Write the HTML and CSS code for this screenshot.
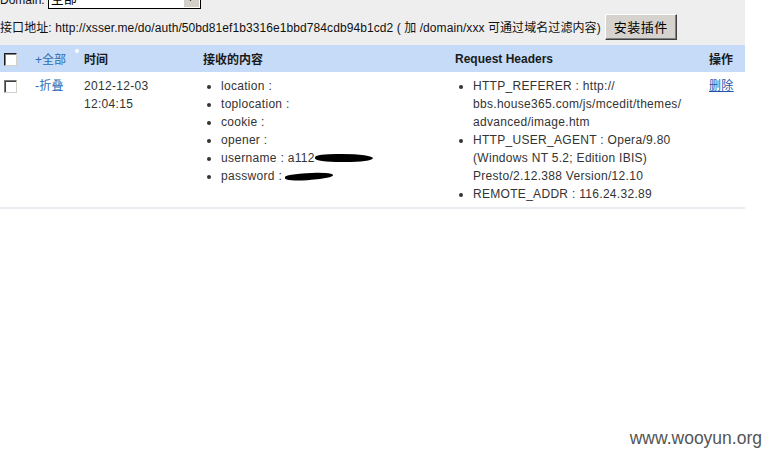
FILE: index.html
```html
<!DOCTYPE html>
<html>
<head>
<meta charset="utf-8">
<link rel="stylesheet" href="styles.css">
</head>
<body>
<div class="page">
  <div class="top">
    <div class="domain-line">
      <span class="label">Domain:</span>
      <span class="select"><span class="sel-text">全部</span><span class="sel-btn"><svg width="8" height="5" viewBox="0 0 8 5"><path d="M0 0h7L3.5 4z" fill="#000"/></svg></span></span>
    </div>
    <div class="api-line">
      <span>接口地址: http://xsser.me/do/auth/50bd81ef1b3316e1bbd784cdb94b1cd2 ( 加 /domain/xxx 可通过域名过滤内容)</span>
      <button class="install">安装插件</button>
    </div>
  </div>
  <table class="grid">
    <colgroup>
      <col class="c1"><col class="c2"><col class="c3"><col class="c4"><col class="c5"><col class="c6">
    </colgroup>
    <thead>
      <tr>
        <th><span class="cb"></span></th>
        <th class="link-cell"><a class="lnk">+全部</a><span class="dot"></span></th>
        <th>时间</th>
        <th>接收的内容</th>
        <th>Request Headers</th>
        <th>操作</th>
      </tr>
    </thead>
    <tbody>
      <tr>
        <td><span class="cb"></span></td>
        <td><a class="lnk">-折叠</a></td>
        <td>2012-12-03<br>12:04:15</td>
        <td>
          <ul>
            <li>location :</li>
            <li>toplocation :</li>
            <li>cookie :</li>
            <li>opener :</li>
            <li>username : a112<span class="blot b1"></span></li>
            <li>password :<span class="blot b2"></span></li>
          </ul>
        </td>
        <td>
          <ul>
            <li>HTTP_REFERER : http://<br>bbs.house365.com/js/mcedit/themes/<br>advanced/image.htm</li>
            <li>HTTP_USER_AGENT : Opera/9.80<br>(Windows NT 5.2; Edition IBIS)<br>Presto/2.12.388 Version/12.10</li>
            <li>REMOTE_ADDR : 116.24.32.89</li>
          </ul>
        </td>
        <td><a class="del">删除</a></td>
      </tr>
    </tbody>
  </table>
  <div class="watermark">www.wooyun.org</div>
</div>
</body>
</html>
```

FILE: styles.css
```css
html, body {
  margin: 0;
  padding: 0;
  background: #fff;
}
body {
  font-family: "Liberation Sans", Arial, "Noto Sans CJK SC", sans-serif;
  font-size: 12px;
  color: #222;
  width: 763px;
  height: 450px;
  overflow: hidden;
}
.page {
  position: relative;
  width: 763px;
  height: 450px;
}
.top {
  width: 745px;
  background: #eeeeee;
  height: 45px;
  overflow: hidden;
}
.domain-line {
  display: flex;
  align-items: flex-end;
  margin-top: -11px;
  height: 20px;
  gap: 3px;
}
.domain-line .label {
  line-height: 14px;
  padding-bottom: 2px;
  color: #111;
}
.select {
  display: flex;
  width: 151px;
  height: 18px;
  border: 1px solid #000;
  background: #fff;
}
.sel-text {
  flex: 1;
  line-height: 18px;
  padding-left: 2px;
  font-size: 13px;
  color: #000;
}
.sel-btn {
  width: 16px;
  height: 16px;
  margin: 1px;
  background: #d4d0c8;
  border-left: 1px solid #fff;
  border-top: 1px solid #fff;
  box-sizing: border-box;
  display: flex;
  align-items: center;
  justify-content: center;
}
.api-line {
  display: flex;
  align-items: center;
  height: 27px;
  margin-top: 4px;
  color: #111;
  white-space: nowrap;
  letter-spacing: 0.08px;
}
.install {
  margin-left: 4px;
  height: 26px;
  width: 72px;
  padding: 0;
  font-family: "Noto Sans CJK SC", sans-serif;
  font-size: 13px;
  letter-spacing: 0.5px;
  color: #000;
  background: #d6d3ce;
  border: 1px solid;
  border-color: #fff #404040 #404040 #fff;
  box-shadow: inset -1px -1px 0 #808080;
}
.grid {
  width: 745px;
  border-collapse: collapse;
  table-layout: fixed;
}
.c1 { width: 31px; }
.c2 { width: 49px; }
.c3 { width: 119px; }
.c4 { width: 252px; }
.c5 { width: 254px; }
.c6 { width: 40px; }
thead tr {
  background: #c5dbf7;
  height: 27px;
}
th {
  text-align: left;
  font-weight: bold;
  padding: 0 4px;
  color: #1a1a1a;
  vertical-align: middle;
}
.link-cell {
  font-weight: normal;
  position: relative;
}
.dot {
  position: absolute;
  right: 1px;
  top: 4px;
  width: 4px;
  height: 4px;
  border-radius: 50%;
  background: #fff;
}
tbody tr {
  border-bottom: 2px solid #ebebf2;
}
td {
  vertical-align: top;
  padding: 5px 4px 4px;
  line-height: 18px;
  color: #333;
  letter-spacing: 0.3px;
}
.cb {
  display: block;
  width: 11px;
  height: 11px;
  border: 1px solid #1c1c1c;
  border-right-color: #d4d0c8;
  border-bottom-color: #d4d0c8;
  background: #fff;
  box-shadow: inset 1px 1px 0 #808080;
  margin-top: 2px;
}
td .cb { border-color: #7a7a7a #d4d0c8 #d4d0c8 #7a7a7a; box-shadow: inset 1px 1px 0 #404040; margin-top: 3px; }
.lnk {
  color: #2c6bb5;
  font-weight: normal;
}
ul {
  margin: 0;
  padding-left: 18px;
  list-style: disc;
}
li {
  line-height: 18px;
}
.del {
  color: #1d56a8;
  text-decoration: underline;
}
.blot {
  display: inline-block;
  vertical-align: middle;
  background: #000;
  border-radius: 40% 60% 50% 50%;
}
.b1 {
  width: 58px;
  height: 8px;
  margin-top: -2px;
  transform: skewX(-10deg);
}
.b2 {
  width: 48px;
  height: 7px;
  margin-left: 3px;
  transform: rotate(-4deg);
}
.watermark {
  position: absolute;
  right: 1px;
  bottom: 1px;
  font-family: "Liberation Sans", Arial, sans-serif;
  font-size: 17.5px;
  color: #555;
}
```
